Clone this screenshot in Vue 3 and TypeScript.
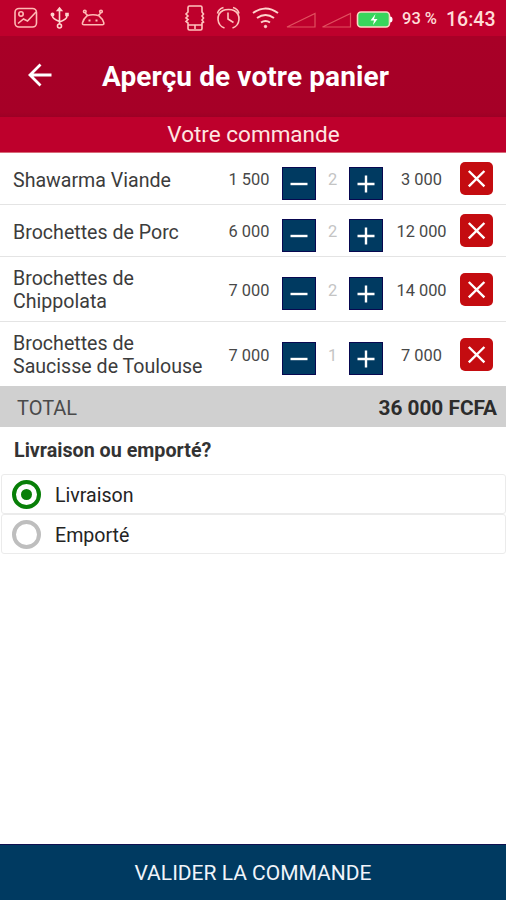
<script setup lang="ts">
import { computed, ref } from 'vue'

interface CartLine {
  name: string
  unit: number
  qty: number
}

const lines = ref<CartLine[]>([
  { name: 'Shawarma Viande', unit: 1500, qty: 2 },
  { name: 'Brochettes de Porc', unit: 6000, qty: 2 },
  { name: 'Brochettes de Chippolata', unit: 7000, qty: 2 },
  { name: 'Brochettes de Saucisse de Toulouse', unit: 7000, qty: 1 },
])
const modes = ['Livraison', 'Emporté']
const mode = ref('Livraison')

const total = computed(() => lines.value.reduce((sum, l) => sum + l.unit * l.qty, 0))
const format = (n: number): string => String(n).replace(/\B(?=(\d{3})+$)/g, ' ')
const change = (line: CartLine, step: number): void => {
  line.qty = Math.max(1, line.qty + step)
}
const remove = (index: number): void => {
  lines.value.splice(index, 1)
}
</script>

<template>
  <div class="screen">
    <div class="status">
      <svg class="status-icons" width="400" height="36" viewBox="0 0 400 36" fill="none" stroke="#ffb9b4" stroke-width="1.6">
        <rect x="15" y="8.500" width="21.500" height="18.500" rx="4" />
        <circle cx="21" cy="14" r="2.200" />
        <path d="M18 23.500l5.500-4.500 4 2 8.500-9" />
        <g stroke="#ffd3cc">
          <path d="M59.500 9v15M52.500 14v2.500q0 2 7 5M66.800 15v2q0 2-7.300 5" />
          <circle cx="59.500" cy="26" r="2" />
          <path d="M57.500 10.500l2-2.500 2 2.500z" fill="#ffd3cc" />
          <circle cx="52.500" cy="14.500" r="1.200" fill="#ffd3cc" />
          <path d="M66 13.500h2v2h-2z" fill="#ffd3cc" />
        </g>
        <path d="M84 24.800q-2 0-1.500-2c.7-3 2-5 4.500-7q6-2 12 0c2.500 2 4 4 4.800 7q.4 2-1.500 2zM87.500 15.500l-2.300-2.500M98.500 15.500l2.300-2.500" />
        <circle cx="84.800" cy="11.500" r="1.300" />
        <circle cx="101" cy="11.500" r="1.300" />
        <path d="M88.500 20.500h2M95.500 20.500h2" stroke-width="2" />
        <g stroke="#ffc3bd">
          <path d="M188 12V7.500q0-1.500 1.500-1.500h11q1.500 0 1.500 1.500V12l1.500 2-1.500 2 1.500 2-1.500 2 1.500 2-1.500 1v5.500q0 1.500-1.500 1.500h-11q-1.500 0-1.500-1.500V23l-2-1.500 2-2-2-1.500 2-2-2-2zM188 25h14M195 25v4" />
        </g>
        <g stroke="#ffc3bd">
          <path d="M224.500 28a9.600 9.600 0 0 1-1.500-17.500q2-1 5.500-1t5.500 1a9.600 9.600 0 0 1-1.500 17.500M228 12.500v6.500l5.500 3.500M217.500 13.500q1-4.500 6-6M239 13.500q-1-4.500-6-6" />
        </g>
        <g stroke="#ffd3cc" stroke-width="2">
          <path d="M253 13q12.500-9 25 0M257 18q8.500-6 17 0M261 22.500q4.500-3 9 0" />
          <circle cx="265.500" cy="26.500" r="1.200" fill="#ffd3cc" stroke-width="1" />
        </g>
        <path d="M287 27h28V13.500zM322.500 27h28V13.500z" stroke="#e0505f" stroke-width="1.200" />
        <rect x="357.500" y="12" width="32" height="15" rx="3.500" fill="#38d65c" stroke="#ffd8c8" stroke-width="1.600" />
        <path d="M390 16.500q2.500 0 2.500 3t-2.500 3z" fill="#fff" stroke="none" />
        <path d="M375.500 14l-5 6.500h3.500l-1 4.500 4.500-6h-3.500z" fill="#fff" stroke="none" />
      </svg>
      <span class="percent">93 %</span>
      <span class="clock">16:43</span>
    </div>

    <header class="bar">
      <svg class="back" width="26" height="26" viewBox="0 0 26 26" fill="none" stroke="#fff" stroke-width="2.800">
        <path d="M24.500 13H3M13.500 2.500L3 13 13.500 23.500" />
      </svg>
      <h1 class="title">Aperçu de votre panier</h1>
    </header>

    <h2 class="section"><span>Votre commande</span></h2>

    <ul class="lines">
      <li v-for="(line, i) in lines" :key="line.name" class="line">
        <span class="name">{{ line.name }}</span>
        <span class="amount">{{ format(line.unit) }}</span>
        <button class="step" aria-label="-" @click="change(line, -1)">
          <svg width="34" height="33" viewBox="0 0 34 33" stroke="#fff" stroke-width="2.400"><path d="M8.500 17h17" /></svg>
        </button>
        <span class="qty">{{ line.qty }}</span>
        <button class="step" aria-label="+" @click="change(line, 1)">
          <svg width="34" height="33" viewBox="0 0 34 33" stroke="#fff" stroke-width="2.400"><path d="M8.500 17h17M17 8.500v17" /></svg>
        </button>
        <span class="amount">{{ format(line.unit * line.qty) }}</span>
        <button class="remove" aria-label="×" @click="remove(i)">
          <svg width="33" height="33" viewBox="0 0 33 33" stroke="#fff" stroke-width="2.400"><path d="M8.800 9l15.600 15.400M24.400 9L8.800 24.400" /></svg>
        </button>
      </li>
    </ul>

    <div class="total">
      <span class="total-label">TOTAL</span>
      <strong class="total-value">{{ format(total) }} FCFA</strong>
    </div>

    <h3 class="question"><span>Livraison ou emporté?</span></h3>
    <div class="options">
      <div v-for="m in modes" :key="m" class="option" @click="mode = m">
        <span class="radio" :class="{ on: m === mode }"></span>
        <span class="option-label">{{ m }}</span>
      </div>
    </div>

    <button class="submit"><span>VALIDER LA COMMANDE</span></button>
  </div>
</template>

<style>
body {
  margin: 0;
  background: #fff;
}
</style>

<style scoped>
.screen {
  display: flex;
  flex-direction: column;
  width: 506px;
  height: 900px;
  overflow: hidden;
  background: #fff;
  color: #3c3c3c;
  font-family: Roboto, "Liberation Sans", sans-serif;
}
h1, h2, h3, ul {
  margin: 0;
  padding: 0;
}
button {
  border: 0;
  padding: 0;
  font-family: inherit;
}
svg {
  display: block;
}
.status {
  display: flex;
  align-items: center;
  height: 36px;
  background: #be002c;
  color: #ffdcd8;
  font-weight: 500;
  white-space: nowrap;
}
.percent {
  width: 44px;
  margin-left: 2px;
  padding-top: 1px;
  font-size: 16.5px;
}
.clock {
  font-size: 19.5px;
  padding-top: 2px;
}
.bar {
  display: flex;
  align-items: center;
  height: 81px;
  background: linear-gradient(#a80027, #a60027 94%, #9d0025);
}
.back {
  margin: -3px 0 0 27px;
}
.title {
  margin-left: 49px;
  color: #fff;
  font-size: 28px;
  font-weight: 700;
  line-height: 36px;
  letter-spacing: 0.1px;
  white-space: nowrap;
}
.section {
  height: 35px;
  border-bottom: 1px solid #d86a78;
  background: #be002c;
  color: #ffe6e2;
  font-size: 22.5px;
  font-weight: 400;
  line-height: 35px;
  text-align: center;
}
.section span {
  padding-left: 1px;
}
.line {
  display: grid;
  grid-template-columns: 206px 63px 34px 33px 34px 77px 33px;
  align-items: center;
  height: 51px;
  padding-left: 13px;
  border-bottom: 1px solid #e4e4e4;
  list-style: none;
}
.line:nth-child(n + 3) {
  height: 64px;
}
.line:last-child {
  border-bottom: 0;
}
.name {
  width: 200px;
  padding-top: 3px;
  font-size: 19.6px;
  line-height: 23px;
}
.line:nth-child(n + 3) .name {
  padding-top: 1px;
}
.amount {
  padding-top: 2px;
  text-align: center;
  font-size: 16.4px;
  color: #484848;
  white-space: nowrap;
}
.amount:nth-child(2) {
  padding-right: 3px;
}
.qty {
  padding-top: 2px;
  text-align: center;
  font-size: 16.4px;
  color: #c4c4c4;
}
.step {
  width: 34px;
  height: 33px;
  margin-top: 9px;
  border: 1px solid #080850;
  background: #003a61;
}
.step svg {
  margin: -1px;
}
.remove {
  width: 33px;
  height: 33px;
  border-radius: 5px;
  background: #c40c10;
}
.total {
  display: flex;
  align-items: center;
  justify-content: space-between;
  height: 41px;
  padding: 3px 9px 0 17px;
  box-sizing: border-box;
  background: #d0d0d0;
}
.total-label {
  font-size: 20px;
  color: #4a4a4a;
}
.total-value {
  font-size: 20.8px;
  color: #2c2c2c;
}
.question {
  height: 47px;
  padding-left: 14px;
  color: #333;
  font-size: 19.7px;
  font-weight: 700;
  line-height: 48px;
}
.options {
  display: grid;
}
.option {
  display: flex;
  align-items: center;
  gap: 14px;
  box-sizing: border-box;
  height: 40px;
  margin-left: 1px;
  padding-left: 10px;
  border: 1px solid #ebebeb;
  border-radius: 3px;
}
.radio {
  display: grid;
  place-items: center;
  box-sizing: border-box;
  width: 29px;
  height: 29px;
  border: 4px solid #bebebe;
  border-radius: 50%;
}
.radio.on {
  border-color: #087f08;
}
.radio.on::after {
  content: "";
  width: 11px;
  height: 11px;
  border-radius: 50%;
  background: #087f08;
}
.option-label {
  padding-top: 3px;
  color: #242424;
  font-size: 19.6px;
}
.submit {
  height: 56px;
  margin-top: auto;
  border-top: 1px solid #101050;
  background: #003a61;
  color: #f0f4fa;
  font-size: 21px;
  padding-top: 1px;
}
</style>
